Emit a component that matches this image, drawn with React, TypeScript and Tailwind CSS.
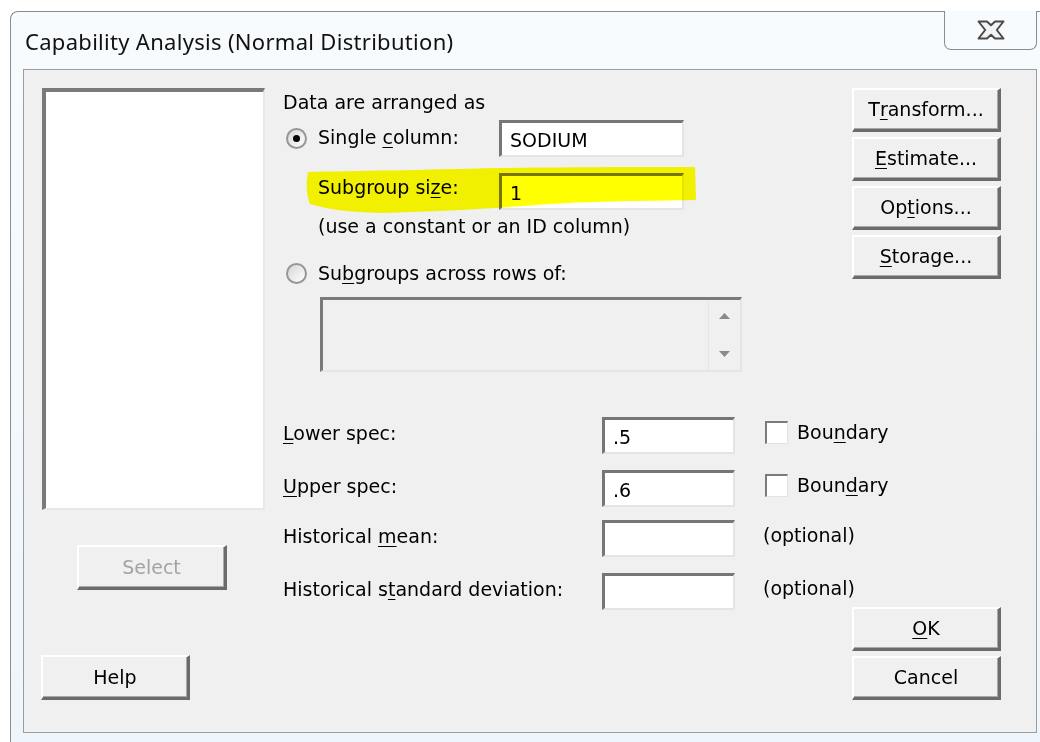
import React from "react";

const ui = { fontFamily: '"DejaVu Sans", "Liberation Sans", sans-serif' };
const titleFont = { fontFamily: '"Noto Sans", "Open Sans", sans-serif' };

function U({ children }: { children: React.ReactNode }) {
  return <span className="underline underline-offset-[3px] decoration-1">{children}</span>;
}

function Button({
  children,
  className = "",
  disabled = false,
}: {
  children: React.ReactNode;
  className?: string;
  disabled?: boolean;
}) {
  return (
    <div
      className={
        "flex items-center justify-center shrink-0 bg-[#f0f0f0] border-t-2 border-l-2 border-r-[3px] border-b-[3px] border-t-white border-l-white border-r-[#6b6b6b] border-b-[#6b6b6b] shadow-[inset_-1px_-1px_0_#a9a9a9] text-[19px] " +
        (disabled ? "text-[#a3a3a3] " : "text-black ") +
        className
      }
    >
      {children}
    </div>
  );
}

function Field({ value = "", className = "" }: { value?: string; className?: string }) {
  return (
    <div
      className={
        "flex items-center shrink-0 bg-white border-t-[3px] border-l-[3px] border-r-2 border-b-2 border-t-[#767676] border-l-[#767676] border-r-[#e4e4e4] border-b-[#e4e4e4] pl-[8px] pt-[3px] text-[19px] text-black " +
        className
      }
    >
      {value}
    </div>
  );
}

function Radio({ checked }: { checked: boolean }) {
  return (
    <div className="w-[21px] h-[21px] rounded-full border-2 border-[#969696] bg-gradient-to-br from-[#d6d6d6] to-white flex items-center justify-center shrink-0">
      {checked && <div className="w-[7px] h-[7px] rounded-full bg-black" />}
    </div>
  );
}

function Check() {
  return (
    <div className="w-[23px] h-[23px] bg-white border-t-2 border-l-2 border-r border-b border-t-[#7a7a7a] border-l-[#7a7a7a] border-r-[#e2e2e2] border-b-[#e2e2e2] shrink-0" />
  );
}

function SpecRow({
  label,
  value,
  after,
  className = "",
}: {
  label: React.ReactNode;
  value?: string;
  after: React.ReactNode;
  className?: string;
}) {
  return (
    <div className={"flex items-center h-[37px] " + className}>
      <div className="w-[319px] shrink-0 -mt-[5px] whitespace-nowrap">{label}</div>
      <Field value={value} className="w-[133px] h-[37px]" />
      {after}
    </div>
  );
}

function CloseGlyph() {
  return (
    <svg width="28" height="20" viewBox="0 0 28 20">
      <path
        d="M1.5 1.5 H10 L14 5.2 L18 1.5 H26.5 L19.8 10 L26.5 18.5 H18 L14 14.8 L10 18.5 H1.5 L8.2 10 Z"
        fill="#f3f3f3"
        stroke="#4a4a4a"
        strokeWidth="2"
        strokeLinejoin="round"
      />
    </svg>
  );
}

export default function App() {
  return (
    <div className="w-[1040px] h-[742px] bg-white overflow-hidden relative" style={ui}>
      {/* window frame */}
      <div className="mt-[11px] ml-[10px] w-[1040px] h-[731px] border-l border-t border-[#8c8c8c] rounded-tl-[8px] bg-gradient-to-b from-[#f7fbfe] to-[#eef6fc] flex flex-col">
        {/* title bar */}
        <div className="h-[57px] flex items-start">
          <div className="pl-[14px] pt-[14px] text-[22px] leading-[30px] tracking-[0.3px] text-[#111] whitespace-nowrap" style={titleFont}>
            Capability Analysis (Normal Distribution)
          </div>
          <div className="ml-auto mr-[13px] -mt-px w-[93px] h-[39px] border border-t-0 border-[#8c8c8c] rounded-b-[7px] bg-[#f8fbfd] flex items-center justify-center">
            <CloseGlyph />
          </div>
        </div>

        {/* client area */}
        <div className="ml-[12px] w-[1014px] h-[664px] border border-[#9c9c9c] bg-[#f0f0f0] flex text-[19px] text-black">
          {/* variable list */}
          <div className="w-[259px] pl-[18px] pt-[18px] flex flex-col shrink-0">
            <div className="w-[223px] h-[422px] bg-white border-t-4 border-l-4 border-r-2 border-b-2 border-t-[#7a7a7a] border-l-[#7a7a7a] border-r-[#e8e8e8] border-b-[#e8e8e8]" />
            <Button disabled className="ml-[35px] mt-[35px] w-[150px] h-[45px]">
              Select
            </Button>
            <Button className="-ml-px mt-[65px] w-[149px] h-[45px]">Help</Button>
          </div>

          {/* main options */}
          <div className="w-[569px] shrink-0 pt-[22px] flex flex-col">
            <div className="h-[20px] leading-[20px] whitespace-nowrap">Data are arranged as</div>

            <div className="mt-[8px] h-[37px] flex items-center">
              <div className="ml-[3px]">
                <Radio checked />
              </div>
              <div className="ml-[11px] w-[181px] shrink-0 -mt-[2px] whitespace-nowrap">
                Single <U>c</U>olumn:
              </div>
              <Field value="SODIUM" className="w-[185px] h-[37px]" />
            </div>

            <div className="mt-[16px] h-[37px] flex items-center pl-[35px]">
              <div className="w-[181px] shrink-0 -mt-[9px] whitespace-nowrap">
                Subgroup si<U>z</U>e:
              </div>
              <Field value="1" className="w-[185px] h-[37px]" />
            </div>

            <div className="mt-[6px] h-[20px] leading-[20px] pl-[35px] whitespace-nowrap">(use a constant or an ID column)</div>

            <div className="mt-[27px] h-[20px] flex items-center">
              <div className="ml-[3px]">
                <Radio checked={false} />
              </div>
              <div className="ml-[11px] whitespace-nowrap">
                Su<U>b</U>groups across rows of:
              </div>
            </div>

            <div className="mt-[14px] ml-[37px] w-[422px] h-[75px] bg-[#f0f0f0] border-t-[3px] border-l-[3px] border-r-2 border-b-2 border-t-[#7a7a7a] border-l-[#7a7a7a] border-r-[#e4e4e4] border-b-[#e4e4e4] flex justify-end">
              <div className="w-[32px] border-l border-[#e6e6e6] flex flex-col items-center justify-between py-[12px]">
                <svg width="13" height="8" viewBox="0 0 13 8">
                  <path d="M6.5 1 L12 7 L1 7 Z" fill="#8a8a8a" />
                </svg>
                <svg width="13" height="8" viewBox="0 0 13 8">
                  <path d="M1 1 L12 1 L6.5 7 Z" fill="#8a8a8a" />
                </svg>
              </div>
            </div>

            <SpecRow
              className="mt-[45px]"
              label={
                <>
                  <U>L</U>ower spec:
                </>
              }
              value=".5"
              after={
                <div className="ml-[30px] flex items-center gap-[9px] -mt-[6px] whitespace-nowrap">
                  <Check />
                  <span>
                    Bou<U>n</U>dary
                  </span>
                </div>
              }
            />
            <SpecRow
              className="mt-[16px]"
              label={
                <>
                  <U>U</U>pper spec:
                </>
              }
              value=".6"
              after={
                <div className="ml-[30px] flex items-center gap-[9px] -mt-[6px] whitespace-nowrap">
                  <Check />
                  <span>
                    Boun<U>d</U>ary
                  </span>
                </div>
              }
            />
            <SpecRow
              className="mt-[13px]"
              label={
                <>
                  Historical <U>m</U>ean:
                </>
              }
              after={<span className="ml-[28px] -mt-[6px] whitespace-nowrap">(optional)</span>}
            />
            <SpecRow
              className="mt-[16px]"
              label={
                <>
                  Historical s<U>t</U>andard deviation:
                </>
              }
              after={<span className="ml-[28px] -mt-[6px] whitespace-nowrap">(optional)</span>}
            />
          </div>

          {/* command buttons */}
          <div className="w-[149px] shrink-0 pt-[18px] flex flex-col gap-[5px]">
            <Button className="h-[44px]">
              T<U>r</U>ansform...
            </Button>
            <Button className="h-[44px]">
              <U>E</U>stimate...
            </Button>
            <Button className="h-[44px]">
              Op<U>t</U>ions...
            </Button>
            <Button className="h-[44px]">
              <U>S</U>torage...
            </Button>
            <Button className="h-[44px] mt-[323px]">
              <U>O</U>K
            </Button>
            <Button className="h-[44px]">Cancel</Button>
          </div>
        </div>
      </div>

      {/* highlighter stroke */}
      <svg
        className="absolute left-[300px] top-[160px] mix-blend-multiply pointer-events-none"
        width="405"
        height="60"
        viewBox="0 0 405 60"
      >
        <path
          d="M8 12 C 60 11, 120 10, 200 8 C 280 7, 340 7, 395 7 L 396 40 C 340 41, 300 41, 250 44 C 200 48, 150 51, 80 53 C 50 52, 30 50, 10 44 C 6 34, 6 22, 8 12 Z"
          fill="#ffff00"
        />
      </svg>
    </div>
  );
}
